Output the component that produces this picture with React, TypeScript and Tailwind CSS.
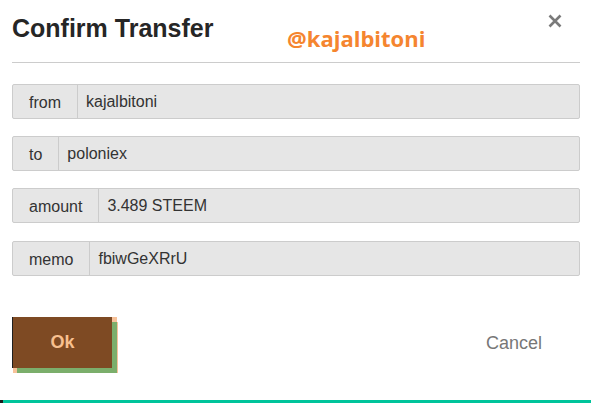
import React from 'react';

const fields = [
  { label: 'from', value: 'kajalbitoni' },
  { label: 'to', value: 'poloniex' },
  { label: 'amount', value: '3.489 STEEM' },
  { label: 'memo', value: 'fbiwGeXRrU' },
];

export default function App() {
  return (
    <div className="relative w-[591px] h-[403px] bg-white overflow-hidden font-['Liberation_Sans',Arial,sans-serif]">
      <div className="pl-[12px] pr-[11px]">
        {/* Header */}
        <div className="relative pt-[14px]">
          <h1 className="text-[25px] leading-[28px] font-bold text-[#262626]">Confirm Transfer</h1>
          <span className="absolute left-[275px] top-[24px] text-[22px] leading-[28px] font-bold text-[#f5852f] font-['Open_Sans',sans-serif]">
            @kajalbitoni
          </span>
          <button className="absolute right-[18px] top-[14px] w-[14px] h-[14px]">
            <svg viewBox="0 0 14 14" width="14" height="14">
              <path d="M1.5 1.5 L12.5 12.5 M12.5 1.5 L1.5 12.5" stroke="#7a7a7a" strokeWidth="2.6" />
            </svg>
          </button>
        </div>
        <div className="mt-[20px] h-px bg-[#cccccc]" />

        {/* Fields */}
        <div className="mt-[21px] flex flex-col gap-[17px]">
          {fields.map((f, i) => (
            <div
              key={f.label}
              className={`flex h-[35px] border border-[#cccccc] rounded-[2px] bg-[#e6e6e6] text-[16px] text-[#333333] ${i === 3 ? 'mt-px' : ''}`}
            >
              <div className="flex items-center px-4 pt-[2px] border-r border-[#cccccc]">{f.label}</div>
              <div className="flex items-center pl-[8px]">{f.value}</div>
            </div>
          ))}
        </div>

        {/* Actions */}
        <div className="mt-[41px] flex items-center justify-between">
          <button className="w-[100px] h-[51px] bg-[#7e4a23] border-l border-[#1f1f1f] text-[18px] font-bold text-[#f8c08f] shadow-[5px_5px_0_#7bae6b,6px_5px_0_#f7c29a,5px_0_0_#f7c29a,1px_5px_0_#f7c29a]">
            Ok
          </button>
          <button className="mr-[38px] mt-[1px] text-[18px] text-[#777777]">Cancel</button>
        </div>
      </div>

      {/* Bottom bar */}
      <div className="absolute left-0 right-0 bottom-0 h-[3px] flex">
        <div className="w-[3px] bg-[#1c1c1c]" />
        <div className="flex-1 bg-[#00c49b]" />
      </div>
    </div>
  );
}
